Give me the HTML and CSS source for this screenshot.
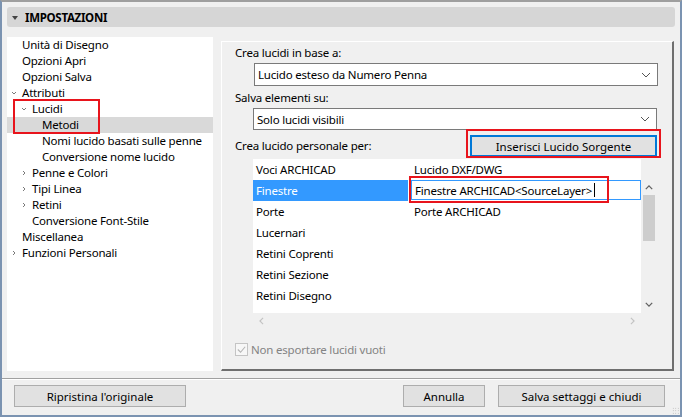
FILE: index.html
```html
<!DOCTYPE html>
<html lang="it">
<head>
  <meta charset="UTF-8">
  <title>Impostazioni</title>
  <link rel="stylesheet" href="styles.css">
</head>
<body>
  <div class="window">
    <div class="header">
      <span class="tri"></span>
      <span class="header-title">IMPOSTAZIONI</span>
    </div>

    <div class="main">
      <div class="tree">
        <div class="node l0">Unità di Disegno</div>
        <div class="node l0">Opzioni Apri</div>
        <div class="node l0">Opzioni Salva</div>
        <div class="node l0"><svg class="tw" viewBox="0 0 6 6"><polyline points="1,2 3,4 5,2"/></svg>Attributi</div>
        <div class="node l1"><svg class="tw" viewBox="0 0 6 6"><polyline points="1,2 3,4 5,2"/></svg>Lucidi</div>
        <div class="node l2 selected">Metodi</div>
        <div class="node l2">Nomi lucido basati sulle penne</div>
        <div class="node l2">Conversione nome lucido</div>
        <div class="node l1"><svg class="tw" viewBox="0 0 6 6"><polyline points="2,1 4,3 2,5"/></svg>Penne e Colori</div>
        <div class="node l1"><svg class="tw" viewBox="0 0 6 6"><polyline points="2,1 4,3 2,5"/></svg>Tipi Linea</div>
        <div class="node l1"><svg class="tw" viewBox="0 0 6 6"><polyline points="2,1 4,3 2,5"/></svg>Retini</div>
        <div class="node l1">Conversione Font-Stile</div>
        <div class="node l0">Miscellanea</div>
        <div class="node l0"><svg class="tw" viewBox="0 0 6 6"><polyline points="2,1 4,3 2,5"/></svg>Funzioni Personali</div>
        <div class="mark mark-tree"></div>
      </div>

      <div class="panel">
        <div class="label">Crea lucidi in base a:</div>
        <div class="select sel1">
          <span>Lucido esteso da Numero Penna</span>
          <svg class="caret" viewBox="0 0 10 6"><polyline points="1,1 5,5 9,1"/></svg>
        </div>
        <div class="label lab2">Salva elementi su:</div>
        <div class="select sel2">
          <span>Solo lucidi visibili</span>
          <svg class="caret" viewBox="0 0 10 6"><polyline points="1,1 5,5 9,1"/></svg>
        </div>
        <div class="row3">
          <span class="label">Crea lucido personale per:</span>
          <button class="btn-src">Inserisci Lucido Sorgente</button>
          <div class="mark mark-btn"></div>
        </div>

        <div class="table">
          <div class="table-top">
            <div class="rows">
              <div class="tr"><div class="c1">Voci ARCHICAD</div><div class="c2">Lucido DXF/DWG</div></div>
              <div class="tr"><div class="c1 hl">Finestre</div><div class="c2"><div class="edit">Finestre ARCHICAD&lt;SourceLayer&gt;<span class="caret-line"></span></div></div></div>
              <div class="tr"><div class="c1">Porte</div><div class="c2">Porte ARCHICAD</div></div>
              <div class="tr"><div class="c1">Lucernari</div><div class="c2"></div></div>
              <div class="tr"><div class="c1">Retini Coprenti</div><div class="c2"></div></div>
              <div class="tr"><div class="c1">Retini Sezione</div><div class="c2"></div></div>
              <div class="tr"><div class="c1">Retini Disegno</div><div class="c2"></div></div>
              <div class="tr"><div class="c1">Linee Sovrapposte Sbalzo</div><div class="c2"></div></div>
            </div>
            <div class="vscroll">
              <svg class="arr" viewBox="0 0 10 6"><polyline points="1,5 5,1 9,5"/></svg>
              <div class="thumb"></div>
              <div class="vspace"></div>
              <svg class="arr" viewBox="0 0 10 6"><polyline points="1,1 5,5 9,1"/></svg>
            </div>
          </div>
          <div class="hscroll">
            <svg class="harr" viewBox="0 0 6 10"><polyline points="5,1 1,5 5,9"/></svg>
            <svg class="harr" viewBox="0 0 6 10"><polyline points="1,1 5,5 1,9"/></svg>
          </div>
          <div class="mark mark-edit"></div>
        </div>

        <div class="check-row">
          <span class="checkbox"><svg viewBox="0 0 12 12"><polyline points="2,6 5,9 10,3"/></svg></span>
          <span class="check-label">Non esportare lucidi vuoti</span>
        </div>
      </div>
    </div>

    <div class="sep"></div>

    <div class="footer">
      <button class="btn btn-reset">Ripristina l'originale</button>
      <div class="footer-right">
        <button class="btn btn-cancel">Annulla</button>
        <button class="btn btn-save">Salva settaggi e chiudi</button>
      </div>
    </div>
    <div class="grip"></div>
  </div>
</body>
</html>
```

FILE: styles.css
```css
body {
  margin: 0;
  padding: 0;
  background: #f0f0f0;
  font-family: "Noto Sans", "Open Sans", sans-serif;
  font-size: 11.5px;
  letter-spacing: -0.2px;
  color: #000;
  overflow: hidden;
}
.window {
  position: relative;
  width: 682px;
  height: 417px;
  box-sizing: border-box;
  border: 2px solid #7b93b1;
  border-top: 2px solid #9f9f9f;
  padding: 5px 5px 0 5px;
}
.header {
  height: 20px;
  background: #d6d6d6;
  border-radius: 3px;
  display: flex;
  align-items: center;
  padding-left: 5px;
}
.tri {
  width: 0;
  height: 0;
  border-left: 3.5px solid transparent;
  border-right: 3.5px solid transparent;
  border-top: 4px solid #444;
  margin-right: 7px;
  margin-top: 1px;
}
.header-title {
  font-weight: bold;
  font-size: 11.5px;
  letter-spacing: -0.3px;
}
.main {
  display: flex;
  margin-top: 10px;
  height: 334px;
}
.tree {
  position: relative;
  width: 206px;
  background: #fff;
  flex: none;
}
.node {
  height: 16px;
  line-height: 16px;
  white-space: nowrap;
  display: flex;
  align-items: center;
}
.node.l0 { padding-left: 15px; }
.node.l1 { padding-left: 25px; }
.node.l2 { padding-left: 35px; }
.node .tw {
  width: 6px;
  height: 6px;
  margin-left: -11px;
  margin-right: 5px;
  fill: none;
  stroke: #7a7a7a;
  stroke-width: 1;
}
.node.selected {
  background: #d9d9d9;
}
.mark {
  position: absolute;
  border: 2px solid #e8141c;
  box-sizing: border-box;
  pointer-events: none;
}
.mark-tree {
  left: 6px;
  top: 62px;
  width: 87px;
  height: 35px;
}
.panel {
  width: 453px;
  height: 330px;
  margin-top: 4px;
  margin-left: 8px;
  box-sizing: border-box;
  border-top: 1px solid #fff;
  border-left: 1px solid #fff;
  border-right: 2px solid #6f6f6f;
  border-bottom: 2px solid #6f6f6f;
  padding: 3px 0 0 13px;
}
.label {
  height: 16px;
  line-height: 16px;
}
.select {
  width: 404px;
  box-sizing: border-box;
  background: #fff;
  border: 1px solid #7a7a7a;
  display: flex;
  align-items: center;
  justify-content: space-between;
  padding: 0 6px 0 3px;
}
.sel1 {
  margin: 2px 0 0 19px;
  height: 23px;
}
.sel2 {
  margin: 2px 0 0 18px;
  height: 22px;
}
.lab2 {
  margin-top: 4px;
}
.caret {
  width: 10px;
  height: 6px;
  fill: none;
  stroke: #555;
  stroke-width: 1;
}
.row3 {
  position: relative;
  display: flex;
  align-items: center;
  justify-content: space-between;
  width: 422px;
  margin-top: 5px;
  height: 22px;
}
.btn-src {
  width: 187px;
  height: 22px;
  background: #e1e1e1;
  border: 2px solid #0078d7;
  font: inherit;
  padding: 0;
}
.mark-btn {
  left: 231px;
  top: -6px;
  width: 195px;
  height: 29px;
}
.table {
  position: relative;
  margin: 2px 0 0 18px;
  width: 403px;
}
.table-top {
  display: flex;
  height: 154px;
}
.rows {
  width: 388px;
  background: #fff;
  overflow: hidden;
}
.tr {
  display: flex;
  height: 21px;
  line-height: 21px;
  white-space: nowrap;
  flex: none;
}
.c1 {
  width: 155px;
  padding-left: 3px;
  margin-right: 2px;
  box-sizing: border-box;
}
.c1.hl {
  background: #3399ff;
  color: #fff;
}
.c2 {
  flex: 1;
  padding-left: 4px;
  box-sizing: border-box;
}
.c2 .edit {
  margin-left: -3px;
  height: 20px;
  line-height: 19px;
  border: 1px solid #3399ff;
  box-sizing: border-box;
  padding-left: 3px;
  display: flex;
  align-items: center;
}
.caret-line {
  display: inline-block;
  width: 1px;
  height: 14px;
  background: #000;
  margin-left: 2px;
}
.vscroll {
  width: 15px;
  background: #f0f0f0;
  display: flex;
  flex-direction: column;
  align-items: center;
  padding-top: 26px;
  padding-bottom: 6px;
  box-sizing: border-box;
}
.arr {
  width: 8px;
  height: 5px;
  fill: none;
  stroke: #606060;
  stroke-width: 1.6;
  flex: none;
}
.thumb {
  width: 12px;
  height: 46px;
  background: #cdcdcd;
  margin-top: 5px;
  flex: none;
}
.vspace { flex: 1; }
.hscroll {
  height: 15px;
  background: #f0f0f0;
  display: flex;
  justify-content: space-between;
  align-items: center;
  width: 388px;
  padding: 0 6px;
  box-sizing: border-box;
}
.harr {
  width: 5px;
  height: 8px;
  fill: none;
  stroke: #c2c2c2;
  stroke-width: 1.4;
}
.mark-edit {
  left: 156px;
  top: 17px;
  width: 200px;
  height: 27px;
}
.check-row {
  display: flex;
  align-items: center;
  margin-top: 14px;
  height: 14px;
}
.checkbox {
  width: 13px;
  height: 13px;
  box-sizing: border-box;
  border: 1px solid #c4c4c4;
  background: #f7f7f7;
  margin-right: 3px;
  display: flex;
}
.checkbox svg {
  width: 11px;
  height: 11px;
  fill: none;
  stroke: #b5b5b5;
  stroke-width: 1.2;
}
.check-label {
  color: #838383;
}
.sep {
  margin: 7px -5px 0 -5px;
  height: 1px;
  background: #a0a0a0;
  border-bottom: 1px solid #fff;
}
.footer {
  display: flex;
  justify-content: space-between;
  margin-top: 5px;
  padding: 0 10px 0 7px;
}
.footer-right {
  display: flex;
  gap: 13px;
}
.btn {
  height: 22px;
  background: #e1e1e1;
  border: 1px solid #adadad;
  font: inherit;
  padding: 0;
}
.btn-reset { width: 172px; }
.btn-cancel { width: 82px; }
.btn-save { width: 167px; }
.grip {
  position: absolute;
  right: 1px;
  bottom: 1px;
  width: 7px;
  height: 7px;
  background-image: radial-gradient(#b0b0b0 40%, transparent 45%);
  background-size: 2.5px 2.5px;
}
```
